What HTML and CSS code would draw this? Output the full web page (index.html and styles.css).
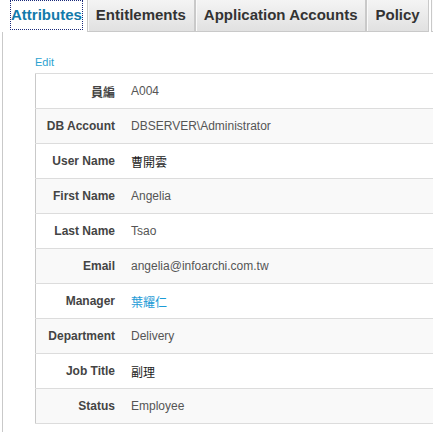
FILE: index.html
```html
<!DOCTYPE html>
<html>
<head>
<meta charset="utf-8">
<link rel="stylesheet" href="styles.css">
</head>
<body>
<div class="tabs">
  <div class="tab active"><a class="tab-link">Attributes</a></div>
  <div class="tab">Entitlements</div>
  <div class="tab">Application Accounts</div>
  <div class="tab">Policy</div>
  <div class="tab stub"></div>
</div>
<div class="panel">
  <a class="edit">Edit</a>
  <table class="attrs">
    <tr><th>員編</th><td>A004</td></tr>
    <tr><th>DB Account</th><td>DBSERVER\Administrator</td></tr>
    <tr><th>User Name</th><td class="cjk">曹開雲</td></tr>
    <tr><th>First Name</th><td>Angelia</td></tr>
    <tr><th>Last Name</th><td>Tsao</td></tr>
    <tr><th>Email</th><td>angelia@infoarchi.com.tw</td></tr>
    <tr><th>Manager</th><td><a class="link">葉耀仁</a></td></tr>
    <tr><th>Department</th><td>Delivery</td></tr>
    <tr><th>Job Title</th><td class="cjk">副理</td></tr>
    <tr><th>Status</th><td>Employee</td></tr>
  </table>
</div>
</body>
</html>
```

FILE: styles.css
```css
html, body {
  margin: 0;
  padding: 0;
  overflow: hidden;
  background: #fff;
  width: 433px;
  height: 432px;
}
body {
  font-family: "Liberation Sans", Arial, "Noto Sans CJK TC", sans-serif;
}
.tabs {
  display: flex;
  margin-left: 3px;
  white-space: nowrap;
  height: 32px;
}
.tab {
  box-sizing: border-box;
  height: 32px;
  line-height: 30px;
  padding: 0 8px;
  font-size: 15px;
  font-weight: bold;
  color: #333;
  background: linear-gradient(#f4f4f4, #e1e1e1);
  border: 1px solid #c9c9c9;
  border-top: none;
  box-shadow: inset 1px 0 0 #fafafa;
  flex: none;
}
.tab.stub {
  width: 20px;
  margin-left: 2px;
}
.tab.active {
  background: #fff;
  border-color: #fff;
  box-shadow: none;
  padding: 0 3px 0 6px;
}
.tab-link {
  display: inline-block;
  height: 30px;
  padding: 0 1px;
  color: #127aab;
  outline: 1px dotted #1a2a7a;
  outline-offset: -1px;
}
.panel {
  margin-left: 2px;
  border-left: 1px solid #c9c9c9;
  padding: 24px 0 0 32px;
  height: 400px;
}
.edit {
  display: block;
  font-size: 11px;
  line-height: 13px;
  color: #2ba2d0;
  margin-bottom: 4px;
}
.attrs {
  border-collapse: collapse;
  width: 600px;
  border-left: 1px solid #c9c9c9;
}
.attrs tr {
  height: 35px;
  border-top: 1px solid #dcdcdc;
  border-bottom: 1px solid #dcdcdc;
}
.attrs tr:nth-child(even) {
  background: #f9f9f9;
}
.attrs th {
  width: 79px;
  padding: 0 8px 0 0;
  text-align: right;
  font-size: 12px;
  font-weight: bold;
  color: #444;
  white-space: nowrap;
}
.attrs td {
  padding: 0 0 0 8px;
  text-align: left;
  font-size: 12px;
  color: #555;
  white-space: nowrap;
}
.attrs td.cjk {
  color: #222;
}
.link {
  color: #1c9bd6;
}
```
